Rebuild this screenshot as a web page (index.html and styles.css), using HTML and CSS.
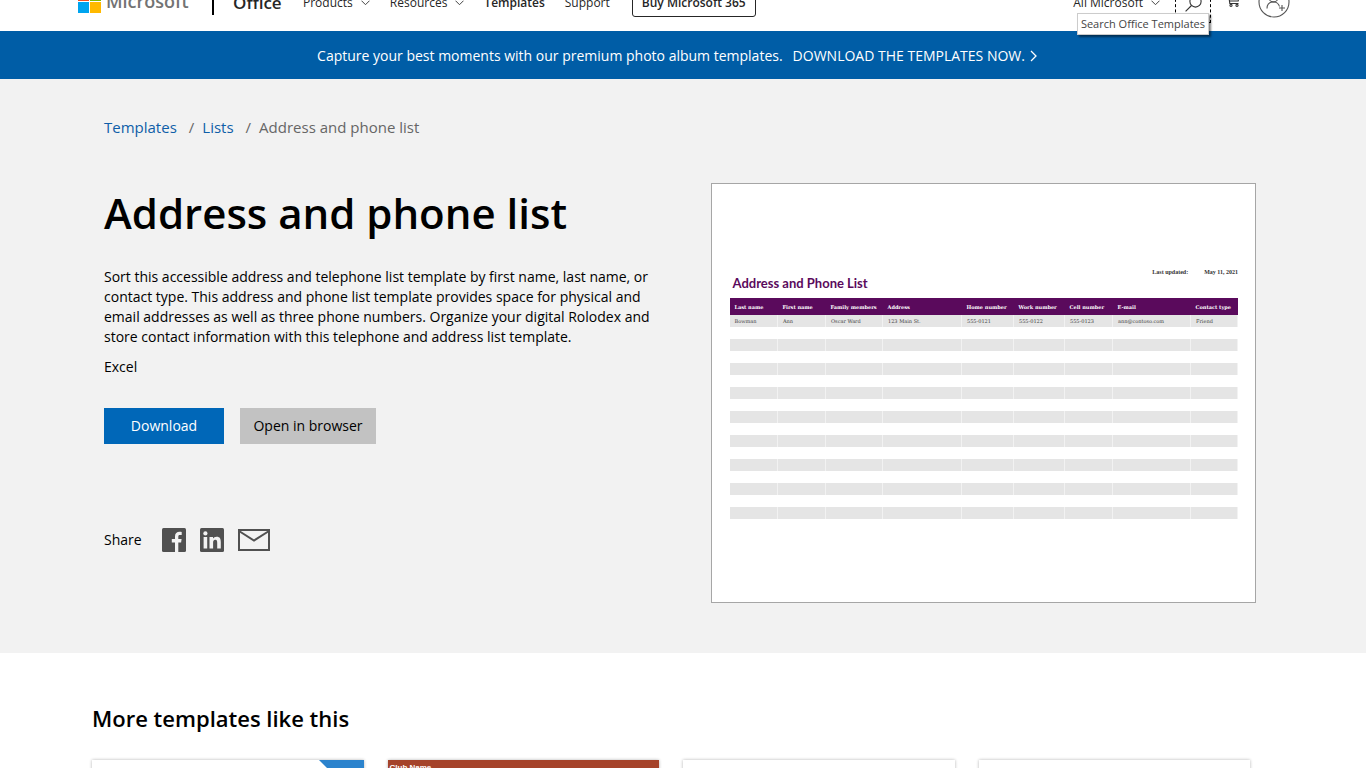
FILE: index.html
```html
<!DOCTYPE html>
<html lang="en">
<head>
<meta charset="utf-8">
<title>Address and phone list</title>
<link rel="stylesheet" href="styles.css">
</head>
<body>
<header class="header">
  <a class="logo" href="#">
    <svg width="23" height="23" viewBox="0 0 23 23" aria-hidden="true"><path fill="#f25022" d="M0 0h11v11H0z"/><path fill="#7fba00" d="M12 0h11v11H12z"/><path fill="#00a4ef" d="M0 12h11v11H0z"/><path fill="#ffb900" d="M12 12h11v11H12z"/></svg>
    <span>Microsoft</span>
  </a>
  <span class="divider"></span>
  <a class="brand" href="#">Office</a>
  <nav class="nav">
    <button class="menu" type="button">Products <svg class="chevron" viewBox="0 0 9 6"><path d="M.5.7l4 4 4-4"/></svg></button>
    <button class="menu" type="button">Resources <svg class="chevron" viewBox="0 0 9 6"><path d="M.5.7l4 4 4-4"/></svg></button>
    <a class="current" href="#">Templates</a>
    <a href="#">Support</a>
    <a class="buy" href="#">Buy Microsoft 365</a>
  </nav>
  <div class="tools">
    <button class="menu" type="button">All Microsoft <svg class="chevron" viewBox="0 0 9 6"><path d="M.5.7l4 4 4-4"/></svg></button>
    <button class="search" type="button" aria-label="Search">
      <svg width="17" height="17" viewBox="0 0 17 17" fill="none" stroke="#333" stroke-width="1.1"><circle cx="10.5" cy="6.5" r="5.6"/><path d="M6.5 10.5L.6 16.4"/></svg>
    </button>
    <span class="tooltip" role="tooltip">Search Office Templates</span>
    <button class="cart" type="button" aria-label="Cart">
      <svg width="14" height="14" viewBox="0 0 14 14" fill="none" stroke="#333" stroke-width="1.1"><path d="M.5 1h2l1.3 9.500h8.700M3 3h10l-.8 5H3.700"/><circle cx="5" cy="12.300" r="1.100"/><circle cx="11" cy="12.300" r="1.100"/></svg>
    </button>
    <button class="account" type="button" aria-label="Sign in">
      <svg width="32" height="32" viewBox="0 0 32 32" fill="none" stroke="#555" stroke-width="1.1"><circle cx="16" cy="16" r="15"/><circle cx="15.500" cy="11.500" r="4.500"/><path d="M9 22.500c0-8.500 11-8.500 12.500-2M24 19v6M21 22h6"/></svg>
    </button>
  </div>
</header>

<div class="banner">
  <span>Capture your best moments with our premium photo album templates.</span>
  <a href="#">DOWNLOAD THE TEMPLATES NOW. <svg width="7" height="12" viewBox="0 0 7 12" fill="none" stroke="#fff" stroke-width="1.300"><path d="M1 1l5 5-5 5"/></svg></a>
</div>

<main>
  <section class="hero">
    <nav class="crumbs" aria-label="Breadcrumb">
      <a href="#">Templates</a><span class="slash">/</span><a href="#">Lists</a><span class="slash">/</span><span>Address and phone list</span>
    </nav>
    <div class="columns">
      <div class="details">
        <h1>Address and phone list</h1>
        <p class="summary">Sort this accessible address and telephone list template by first name, last name, or contact type. This address and phone list template provides space for physical and email addresses as well as three phone numbers. Organize your digital Rolodex and store contact information with this telephone and address list template.</p>
        <p class="app">Excel</p>
        <div class="actions">
          <button class="btn primary" type="button">Download</button>
          <button class="btn" type="button">Open in browser</button>
        </div>
        <div class="share">
          <span>Share</span>
          <a href="#" aria-label="Facebook"><svg width="24" height="24" viewBox="0 0 24 24"><rect width="24" height="24" rx="1.500" fill="#505050"/><path fill="#f2f2f2" d="M13 24v-9.500h-3.200V11H13V8.500C13 5.300 14.800 3.800 17.600 3.800c1 0 1.700.1 2.100.1v3.200h-1.800c-1.300 0-1.600.7-1.600 1.700V11h3.300l-.5 3.500h-2.800V24z"/></svg></a>
          <a href="#" aria-label="LinkedIn"><svg width="24" height="24" viewBox="0 0 24 24"><rect width="24" height="24" rx="1.500" fill="#505050"/><g fill="#f2f2f2"><circle cx="5.400" cy="5.400" r="2.100"/><path d="M3.600 9h3.600v11.400H3.600zM9.500 9H13v1.600c.6-1.100 1.900-1.900 3.600-1.900 3.500 0 4.200 2.200 4.200 5.300v6.400h-3.600v-5.700c0-1.500-.1-3-1.900-3s-2.200 1.400-2.200 2.900v5.800H9.500z"/></g></svg></a>
          <a href="#" aria-label="Email"><svg width="32" height="22" viewBox="0 0 32 22" fill="none" stroke="#505050" stroke-width="2"><path d="M1 1h30v20H1zM1 2l15 9.500L31 2"/></svg></a>
        </div>
      </div>
      <div class="preview">
        <div class="updated"><span>Last updated:</span><span>May 11, 2021</span></div>
        <h2>Address and Phone List</h2>
        <table>
          <colgroup><col style="width:48px"><col style="width:48px"><col style="width:57px"><col style="width:79px"><col style="width:52px"><col style="width:51px"><col style="width:48px"><col style="width:78px"><col style="width:47px"></colgroup>
          <thead><tr><th>Last name</th><th>First name</th><th>Family members</th><th>Address</th><th>Home number</th><th>Work number</th><th>Cell number</th><th>E-mail</th><th>Contact type</th></tr></thead>
          <tbody>
            <tr><td>Bowman</td><td>Ann</td><td>Oscar Ward</td><td>123 Main St.</td><td>555-0121</td><td>555-0122</td><td>555-0123</td><td>ann@contoso.com</td><td>Friend</td></tr>
            <tr><td></td><td></td><td></td><td></td><td></td><td></td><td></td><td></td><td></td></tr>
            <tr><td></td><td></td><td></td><td></td><td></td><td></td><td></td><td></td><td></td></tr>
            <tr><td></td><td></td><td></td><td></td><td></td><td></td><td></td><td></td><td></td></tr>
            <tr><td></td><td></td><td></td><td></td><td></td><td></td><td></td><td></td><td></td></tr>
            <tr><td></td><td></td><td></td><td></td><td></td><td></td><td></td><td></td><td></td></tr>
            <tr><td></td><td></td><td></td><td></td><td></td><td></td><td></td><td></td><td></td></tr>
            <tr><td></td><td></td><td></td><td></td><td></td><td></td><td></td><td></td><td></td></tr>
            <tr><td></td><td></td><td></td><td></td><td></td><td></td><td></td><td></td><td></td></tr>
            <tr><td></td><td></td><td></td><td></td><td></td><td></td><td></td><td></td><td></td></tr>
            <tr><td></td><td></td><td></td><td></td><td></td><td></td><td></td><td></td><td></td></tr>
            <tr><td></td><td></td><td></td><td></td><td></td><td></td><td></td><td></td><td></td></tr>
            <tr><td></td><td></td><td></td><td></td><td></td><td></td><td></td><td></td><td></td></tr>
            <tr><td></td><td></td><td></td><td></td><td></td><td></td><td></td><td></td><td></td></tr>
            <tr><td></td><td></td><td></td><td></td><td></td><td></td><td></td><td></td><td></td></tr>
            <tr><td></td><td></td><td></td><td></td><td></td><td></td><td></td><td></td><td></td></tr>
            <tr><td></td><td></td><td></td><td></td><td></td><td></td><td></td><td></td><td></td></tr>
          </tbody>
        </table>
      </div>
    </div>
  </section>

  <section class="more">
    <h2>More templates like this</h2>
    <div class="cards">
      <a class="card ribbon" href="#" aria-label="Template"><svg width="45" height="45" viewBox="0 0 45 45"><path fill="#2b83cd" d="M0 0h45v45z"/></svg></a>
      <a class="card club" href="#"><span>Club Name</span></a>
      <a class="card" href="#" aria-label="Template"></a>
      <a class="card" href="#" aria-label="Template"></a>
    </div>
  </section>
</main>
</body>
</html>
```
FILE: styles.css
```css
* { box-sizing: border-box; }
body {
  margin: 0;
  height: 100vh;
  overflow: hidden;
  background: #fff;
  color: #000;
  font: 14px/20px "Open Sans", "Noto Sans", sans-serif;
}
h1, h2, p { margin: 0; }
a { color: inherit; text-decoration: none; }
button { border: 0; padding: 0; background: none; color: inherit; font: inherit; cursor: pointer; }
svg { display: block; flex: none; }

/* The header is scrolled halfway out of the window. */
.header {
  display: flex;
  align-items: center;
  height: 56px;
  margin-top: -25px;
  padding: 0 76px 0 78px;
  font-size: 12px;
  color: #262626;
  white-space: nowrap;
}
.logo { display: flex; align-items: center; gap: 5px; width: 134px; height: 52px; padding-bottom: 4px; }
.logo span { font-size: 18px; line-height: 24px; font-weight: 600; color: #737373; }
.divider { width: 2px; height: 24px; background: #000; }
.brand { width: 70px; margin-left: 19px; font-size: 17px; font-weight: 600; }
.nav { display: flex; align-items: center; gap: 20px; }
.menu { display: flex; align-items: center; gap: 8px; }
.chevron { width: 9px; height: 6px; fill: none; stroke: #444; }
.current, .buy { font-weight: 600; }
.buy { margin-left: 2px; padding: 3px 9px; border: 1px solid #262626; border-radius: 3px; }
.tools { position: relative; display: flex; align-items: center; margin-left: auto; }
.search { display: flex; align-items: center; justify-content: center; width: 36px; height: 40px; margin: 0 15px 0 15px; border: 1px dashed #000; }
.cart { margin-right: 18px; padding-bottom: 6px; }
.account { padding-bottom: 2px; }
.tooltip {
  position: absolute;
  z-index: 1;
  right: 81px;
  top: 30px;
  padding: 0 3px;
  border: 1px solid #ccc;
  background: #fff;
  box-shadow: 2px 2px 2px rgba(0, 0, 0, .5);
  color: #444;
  font-size: 11px;
}

.banner {
  display: flex;
  align-items: center;
  justify-content: center;
  gap: 10px;
  height: 48px;
  padding: 2px 12px 0 0;
  background: #005da6;
  color: #fff;
}
.banner a { display: flex; align-items: center; gap: 5px; }

.hero { padding: 38px 110px 50px 104px; background: #f2f2f2; }
.crumbs { display: flex; font-size: 15px; color: #666; }
.crumbs a { color: #0f5ea8; }
.slash { margin: 0 8px 0 12px; }
.columns { display: grid; grid-template-columns: 552fr 545fr; gap: 55px; margin-top: 46px; }
h1 { font-size: 42px; line-height: 60px; font-weight: 600; }
.summary { margin-top: 24px; }
.app { margin-top: 10px; }
.actions { display: flex; gap: 16px; margin-top: 31px; }
.btn { width: 136px; height: 36px; background: #c2c2c2; }
.btn.primary { width: 120px; background: #0067b8; color: #fff; }
.share { display: flex; align-items: center; gap: 14px; margin-top: 84px; }
.share span { margin-right: 6px; }

.preview { min-height: 420px; padding: 84px 17px 0 18px; border: 1px solid #a6a6a6; background: #fff; font: 5px/8px "DejaVu Serif", serif; }
.updated { display: flex; justify-content: flex-end; gap: 16px; font: 700 6px/8px "Liberation Serif", serif; color: #333; }
.preview h2 { margin: 0 0 8px 3px; font: 700 13px/14px Lato, sans-serif; color: #5a0a5c; }
table { width: 100%; table-layout: fixed; border-collapse: collapse; }
th, td { height: 12px; padding: 0 0 0 5px; text-align: left; white-space: nowrap; color: #444; }
th { height: 17px; background: #5a0a5c; color: #fff; }
tbody tr:nth-child(odd) td { background: #e5e5e5; border-right: 1px solid #f2f2f2; }

.more { padding: 47px 116px 0 92px; }
.more h2 { font-size: 22px; line-height: 36px; font-weight: 600; }
.cards { display: grid; grid-template-columns: repeat(4, 1fr); gap: 24px; margin-top: 24px; }
.card { height: 204px; background: #fff; box-shadow: 0 0 3px rgba(0, 0, 0, .3); overflow: hidden; }
.ribbon { display: flex; justify-content: flex-end; }
.club { padding: 2px; background: #a5432a; color: #fff; font: 700 8px/12px "Liberation Sans", sans-serif; }
```
